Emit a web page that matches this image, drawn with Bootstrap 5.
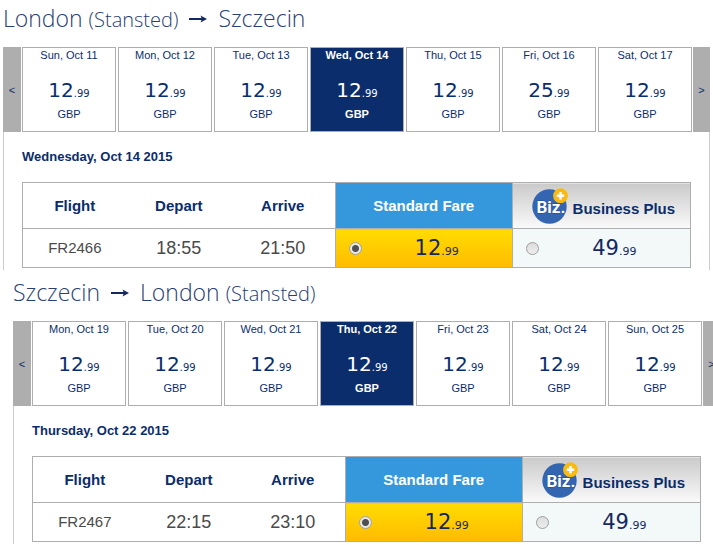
<!DOCTYPE html>
<html lang="en">
<head>
<meta charset="utf-8">
<meta name="viewport" content="width=device-width, initial-scale=1">
<title>Select flights</title>
<link href="https://cdn.jsdelivr.net/npm/bootstrap@5.3.0/dist/css/bootstrap.min.css" rel="stylesheet">
<style>
  :root { --navy: #0b2d6b; --line: #aeaeae; }
  body { font-family: "Liberation Sans", Arial, sans-serif; color: var(--navy); background: #fff; }
  .journey { margin: 0 3px; }
  .journey-return { margin: 4px -7px 0 13px; }
  .route { height: 47px; font: 300 23px/36px "Open Sans", "Noto Sans", sans-serif; color: #2a4070; gap: 11px; }
  .route small { font-size: 20px; }
  .strip { gap: 2px; }
  .strip button { font-size: 11px; line-height: 14px; color: var(--navy); padding: 0; }
  .strip .step { flex: 0 0 18px; background: var(--line); border: 0; margin-right: -1px; }
  .strip .step:last-child { flex-basis: 17px; margin: 0 0 0 -1px; }
  .day { flex: 1 1 0; min-width: 0; height: 85px; background: #fff; border: 1px solid var(--line); }
  .strip .day { padding-bottom: 13px; }
  .strip .day-on { background: var(--navy); color: #fff; font-weight: bold; }
  .price { font-family: "DejaVu Sans", Verdana, sans-serif; font-weight: normal; font-size: 20px; line-height: 24px; }
  .price small { font-size: 10px; }
  .day .price { margin: 16px 0 1px; }
  .panel { border: solid #ccc; border-width: 0 1px; padding: 17px 18px 2px; }
  .panel h2 { font-size: 13px; line-height: 16px; font-weight: bold; margin: 0 0 17px; }
  .fares { width: 100%; table-layout: fixed; border-collapse: collapse; border: 1px solid var(--line); text-align: center; }
  .fares th { height: 46px; font-size: 15px; padding: 2px 0 0; }
  .fares td { height: 39px; font-size: 18px; color: #4a4a4a; padding: 0; }
  .fares thead tr { border-bottom: 1px solid var(--line); }
  .fares .opt { border-left: 1px solid var(--line); }
  .fares .flight-no { font-size: 15px; }
  .std-head { background: #3598dc; color: #fff; }
  .std-cell { background: linear-gradient(#ffdc00, #ffbb00); }
  .biz-head { background: linear-gradient(#cacaca, #fafafa); }
  .biz-cell { background: #f3f8f9; }
  .fares .price { color: #14295f; font-size: 21px; padding-top: 4px; }
  .fares .price small { font-size: 11px; }
  .pick { padding-left: 13px; }
  .pick input { appearance: none; width: 13px; height: 13px; margin: 0; border: 1px solid #a0a0a0; border-radius: 50%; background: linear-gradient(#dcdcdc, #eee); }
  .pick input:checked { background: radial-gradient(circle, #505050 0 3px, #e8e8e8 4px); }
  .biz-label { gap: 4px; padding-left: 4px; }
  .biz-label span { padding-top: 6px; }
</style>
<script src="https://cdn.jsdelivr.net/npm/bootstrap@5.3.0/dist/js/bootstrap.bundle.min.js"></script>
</head>
<body>
<svg class="d-none" xmlns="http://www.w3.org/2000/svg">
  <symbol id="arrow" viewBox="0 0 18 8"><path d="M0 3H12.5L11.5.6 18 4 11.5 7.4 12.5 5H0Z" fill="#14295f"/></symbol>
  <symbol id="biz" viewBox="0 0 37 37">
    <circle cx="17.5" cy="18.5" r="17.2" fill="#3465b0"/>
    <text x="4.5" y="25" font-family="Roboto, Open Sans, sans-serif" font-size="17" font-weight="bold" fill="#fff" stroke="#234f92" stroke-width="1" paint-order="stroke">Biz.</text>
    <circle cx="28.5" cy="7.7" r="7.4" fill="#f9bb10"/>
    <path d="M28.5 4v7.4M24.8 7.7h7.4" stroke="#fff" stroke-width="2.4"/>
  </symbol>
</svg>
<main class="overflow-hidden">
  <section class="journey">
    <h1 class="route d-flex align-items-baseline m-0"><span>London <small>(Stansted)</small></span><svg width="18" height="12" viewBox="0 0 18 12" role="img" aria-label="to"><use href="#arrow" width="18" height="8"/></svg><span>Szczecin</span></h1>
    <div class="strip d-flex">
      <button class="step" type="button">&lt;</button>
      <button class="day" type="button"><div>Sun, Oct 11</div><div class="price">12<small>.99</small></div><div>GBP</div></button>
      <button class="day" type="button"><div>Mon, Oct 12</div><div class="price">12<small>.99</small></div><div>GBP</div></button>
      <button class="day" type="button"><div>Tue, Oct 13</div><div class="price">12<small>.99</small></div><div>GBP</div></button>
      <button class="day day-on" type="button"><div>Wed, Oct 14</div><div class="price">12<small>.99</small></div><div>GBP</div></button>
      <button class="day" type="button"><div>Thu, Oct 15</div><div class="price">12<small>.99</small></div><div>GBP</div></button>
      <button class="day" type="button"><div>Fri, Oct 16</div><div class="price">25<small>.99</small></div><div>GBP</div></button>
      <button class="day" type="button"><div>Sat, Oct 17</div><div class="price">12<small>.99</small></div><div>GBP</div></button>
      <button class="step" type="button">&gt;</button>
    </div>
    <div class="panel">
      <h2>Wednesday, Oct 14 2015</h2>
      <table class="fares">
        <colgroup><col><col><col><col style="width:26.5%"><col style="width:26.7%"></colgroup>
        <thead><tr><th>Flight</th><th>Depart</th><th>Arrive</th><th class="opt std-head">Standard Fare</th>
          <th class="opt biz-head"><div class="biz-label d-flex align-items-center justify-content-center"><svg width="37" height="37" aria-hidden="true"><use href="#biz"/></svg><span>Business Plus</span></div></th></tr></thead>
        <tbody><tr><td class="flight-no">FR2466</td><td>18:55</td><td>21:50</td>
          <td class="opt std-cell"><label class="pick d-flex align-items-center"><input type="radio" name="out" checked><span class="price flex-fill">12<small>.99</small></span></label></td>
          <td class="opt biz-cell"><label class="pick d-flex align-items-center"><input type="radio" name="out"><span class="price flex-fill">49<small>.99</small></span></label></td></tr></tbody>
      </table>
    </div>
  </section>
  <section class="journey journey-return">
    <h1 class="route d-flex align-items-baseline m-0"><span>Szczecin</span><svg width="18" height="12" viewBox="0 0 18 12" role="img" aria-label="to"><use href="#arrow" width="18" height="8"/></svg><span>London <small>(Stansted)</small></span></h1>
    <div class="strip d-flex">
      <button class="step" type="button">&lt;</button>
      <button class="day" type="button"><div>Mon, Oct 19</div><div class="price">12<small>.99</small></div><div>GBP</div></button>
      <button class="day" type="button"><div>Tue, Oct 20</div><div class="price">12<small>.99</small></div><div>GBP</div></button>
      <button class="day" type="button"><div>Wed, Oct 21</div><div class="price">12<small>.99</small></div><div>GBP</div></button>
      <button class="day day-on" type="button"><div>Thu, Oct 22</div><div class="price">12<small>.99</small></div><div>GBP</div></button>
      <button class="day" type="button"><div>Fri, Oct 23</div><div class="price">12<small>.99</small></div><div>GBP</div></button>
      <button class="day" type="button"><div>Sat, Oct 24</div><div class="price">12<small>.99</small></div><div>GBP</div></button>
      <button class="day" type="button"><div>Sun, Oct 25</div><div class="price">12<small>.99</small></div><div>GBP</div></button>
      <button class="step" type="button">&gt;</button>
    </div>
    <div class="panel">
      <h2>Thursday, Oct 22 2015</h2>
      <table class="fares">
        <colgroup><col><col><col><col style="width:26.5%"><col style="width:26.7%"></colgroup>
        <thead><tr><th>Flight</th><th>Depart</th><th>Arrive</th><th class="opt std-head">Standard Fare</th>
          <th class="opt biz-head"><div class="biz-label d-flex align-items-center justify-content-center"><svg width="37" height="37" aria-hidden="true"><use href="#biz"/></svg><span>Business Plus</span></div></th></tr></thead>
        <tbody><tr><td class="flight-no">FR2467</td><td>22:15</td><td>23:10</td>
          <td class="opt std-cell"><label class="pick d-flex align-items-center"><input type="radio" name="back" checked><span class="price flex-fill">12<small>.99</small></span></label></td>
          <td class="opt biz-cell"><label class="pick d-flex align-items-center"><input type="radio" name="back"><span class="price flex-fill">49<small>.99</small></span></label></td></tr></tbody>
      </table>
    </div>
  </section>
</main>
</body>
</html>
